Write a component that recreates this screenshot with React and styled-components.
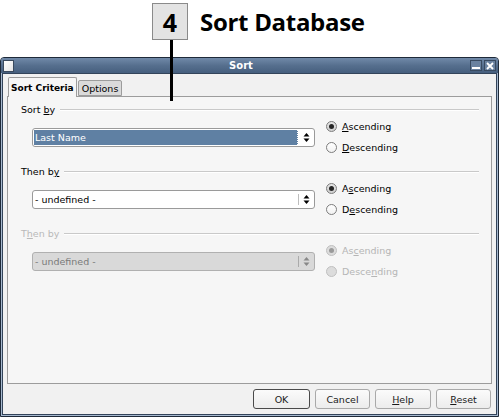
import React from 'react';
import styled, { createGlobalStyle, css } from 'styled-components';

const Global = createGlobalStyle`
  html, body { margin: 0; padding: 0; background: #fff; }
  body { width: 500px; height: 417px; overflow: hidden; font-family: "DejaVu Sans", "Liberation Sans", sans-serif; }
`;

const Page = styled.div`
  position: relative;
  width: 500px;
  height: 417px;
  display: flex;
  flex-direction: column;
`;

const Header = styled.div`
  height: 57px;
  box-sizing: border-box;
  padding: 3px 0 0 152px;
  display: flex;
  align-items: flex-start;
  gap: 12px;
`;

const StepBox = styled.div`
  width: 36px;
  height: 37px;
  box-sizing: border-box;
  border: 1px solid #8a8a8a;
  background: #e3e3e3;
  display: flex;
  align-items: center;
  justify-content: center;
  font: 700 25px "Open Sans", sans-serif;
  color: #000;
`;

const Heading = styled.h1`
  margin: 0;
  font: 700 24px/37px "Open Sans", sans-serif;
  letter-spacing: -0.3px;
  color: #000;
`;

const Leader = styled.div`
  position: absolute;
  left: 170px;
  top: 40px;
  width: 3px;
  height: 61px;
  background: #000;
  z-index: 5;
`;

const Win = styled.div`
  flex: 1;
  display: flex;
  flex-direction: column;
  border: 1px solid #1e2a39;
  border-radius: 4px 4px 0 0;
  background: #a7b9cf;
  margin-right: 1px;
`;

const TitleBar = styled.div`
  height: 15px;
  display: flex;
  align-items: center;
  padding: 0 2px;
  background: linear-gradient(#7089a8, #566f8e 50%, #465f7e);
  border-radius: 3px 3px 0 0;
  position: relative;
`;

const DocIcon = styled.div`
  width: 11px;
  height: 12px;
  background: linear-gradient(135deg, #ffffff, #e4e4e4);
  border: 1px solid #3a4a5e;
  box-sizing: border-box;
`;

const TitleText = styled.div`
  flex: 1;
  text-align: center;
  color: #fff;
  font-weight: 700;
  font-size: 10px;
`;

const WinBtn = styled.div`
  width: 12px;
  height: 11px;
  box-sizing: border-box;
  border: 1px solid #384a60;
  background: #6a82a0;
  margin-left: 2px;
  display: flex;
  align-items: center;
  justify-content: center;
`;

const Body = styled.div`
  flex: 1;
  margin: 0 1px 1px;
  border: 1px solid #33445a;
  background: #f1f1f1;
  display: flex;
  flex-direction: column;
  padding: 3px 4px 5px 4px;
`;

const Tabs = styled.div`
  display: flex;
  align-items: flex-end;
  padding-left: 1px;
  position: relative;
  z-index: 2;
  margin-bottom: -1px;
`;

const Tab = styled.div`
  box-sizing: border-box;
  border: 1px solid #9c9c9c;
  border-bottom: none;
  border-radius: 2px 2px 0 0;
  font-size: 9.5px;
  color: #000;
  display: flex;
  align-items: center;
  padding: 0 2px;
  ${(p) =>
    p.$active
      ? css`
          height: 20px;
          background: #f6f6f6;
          font-weight: 700;
          font-size: 9px;
        `
      : css`
          height: 16px;
          background: #dadada;
          margin-bottom: 1px;
          margin-left: 1px;
          border-bottom: 1px solid #9c9c9c;
          padding: 0 3px;
        `}
`;

const Panel = styled.div`
  flex: 1;
  border: 1px solid #9c9c9c;
  background: #f6f6f6;
  padding: 6px 12px 0 13px;
  display: flex;
  flex-direction: column;
  gap: 7px;
`;

const Section = styled.div`
  display: flex;
  flex-direction: column;
`;

const LabelRow = styled.div`
  height: 13px;
  display: flex;
  align-items: center;
  gap: 5px;
  font-size: 9.5px;
  color: ${(p) => (p.$disabled ? '#b9b9b9' : '#000')};
`;

const Rule = styled.div`
  flex: 1;
  border-top: 1px solid #c9c9c9;
  border-bottom: 1px solid #ffffff;
`;

const ContentRow = styled.div`
  display: flex;
  align-items: center;
  gap: 11px;
  padding-left: 11px;
`;

const Select = styled.div`
  width: 283px;
  height: 19px;
  box-sizing: border-box;
  border: 1px solid ${(p) => (p.$disabled ? '#b0b0b0' : '#9a9a9a')};
  border-radius: 3px;
  background: ${(p) => (p.$disabled ? '#d9d9d9' : '#fff')};
  display: flex;
  align-items: stretch;
  font-size: 9.5px;
`;

const SelectValue = styled.div`
  flex: 1;
  margin: 1px 0 1px 1px;
  padding-left: 1px;
  display: flex;
  align-items: center;
  color: ${(p) => (p.$disabled ? '#7a7a7a' : p.$focused ? '#fff' : '#000')};
  background: ${(p) => (p.$focused ? '#5f80a3' : 'transparent')};
  ${(p) => p.$focused && css`border-right: 1px dotted #ffffff;`}
`;

const Arrows = styled.div`
  width: 16px;
  display: flex;
  align-items: center;
  justify-content: center;
  position: relative;
  ${(p) =>
    p.$sep &&
    css`
      &::before {
        content: '';
        position: absolute;
        left: 0;
        top: 3px;
        bottom: 3px;
        width: 1px;
        background: ${p.$disabled ? '#aaa' : '#bdbdbd'};
      }
    `}
`;

const Radios = styled.div`
  display: flex;
  flex-direction: column;
`;

const RadioRow = styled.div`
  height: 21px;
  display: flex;
  align-items: center;
  gap: 5px;
  font-size: 9.5px;
  color: ${(p) => (p.$disabled ? '#b5b5b5' : '#000')};
`;

const Circle = styled.div`
  width: 11px;
  height: 11px;
  box-sizing: border-box;
  border-radius: 50%;
  border: 1px solid ${(p) => (p.$disabled ? '#c0c0c0' : '#7d7d7d')};
  background: ${(p) =>
    p.$disabled ? '#dcdcdc' : p.$checked ? 'linear-gradient(#e6e6e6, #cfcfcf)' : 'linear-gradient(#ffffff, #f1f1f1)'};
  display: flex;
  align-items: center;
  justify-content: center;
  &::after {
    content: '';
    display: ${(p) => (p.$checked ? 'block' : 'none')};
    width: 5px;
    height: 5px;
    border-radius: 50%;
    background: ${(p) => (p.$disabled ? '#9a9a9a' : '#262626')};
  }
`;

const ButtonRow = styled.div`
  display: flex;
  justify-content: flex-end;
  gap: 5px;
  padding: 5px 1px 0 0;
`;

const Button = styled.div`
  width: ${(p) => p.$w}px;
  height: 20px;
  box-sizing: border-box;
  border: 1px solid ${(p) => (p.$default ? '#4a4a4a' : '#a9a9a9')};
  border-radius: 3px;
  background: linear-gradient(#fbfbfb, #ececec);
  display: flex;
  align-items: center;
  justify-content: center;
  font-size: 9.5px;
  color: #1a1a1a;
`;

const U = styled.span`
  text-decoration: underline;
  text-underline-offset: 1px;
`;

function ArrowIcon({ color = '#000' }) {
  return (
    <svg width="7" height="11" viewBox="0 0 7 11">
      <path d="M3.5 1 L6.5 4.5 L0.5 4.5 Z" fill={color} />
      <path d="M0.5 6.5 L6.5 6.5 L3.5 10 Z" fill={color} />
    </svg>
  );
}

function Radio({ checked, disabled, children }) {
  return (
    <RadioRow $disabled={disabled}>
      <Circle $checked={checked} $disabled={disabled} />
      <span>{children}</span>
    </RadioRow>
  );
}

function SortSection({ label, value, focused, disabled, asc, desc }) {
  return (
    <Section>
      <LabelRow $disabled={disabled}>
        <span>{label}</span>
        <Rule />
      </LabelRow>
      <ContentRow>
        <Select $disabled={disabled}>
          <SelectValue $focused={focused} $disabled={disabled}>{value}</SelectValue>
          <Arrows $sep={!focused} $disabled={disabled}>
            <ArrowIcon color={disabled ? '#888' : '#000'} />
          </Arrows>
        </Select>
        <Radios>
          <Radio checked disabled={disabled}>{asc}</Radio>
          <Radio disabled={disabled}>{desc}</Radio>
        </Radios>
      </ContentRow>
    </Section>
  );
}

export default function App() {
  return (
    <Page>
      <Global />
      <Header>
        <StepBox>4</StepBox>
        <Heading>Sort Database</Heading>
      </Header>
      <Leader />
      <Win>
        <TitleBar>
          <DocIcon />
          <TitleText>Sort</TitleText>
          <WinBtn>
            <svg width="8" height="7" viewBox="0 0 8 7"><rect x="0" y="5" width="8" height="2" fill="#fff" /></svg>
          </WinBtn>
          <WinBtn>
            <svg width="8" height="8" viewBox="0 0 8 8"><path d="M1 1 L7 7 M7 1 L1 7" stroke="#fff" strokeWidth="1.8" /></svg>
          </WinBtn>
        </TitleBar>
        <Body>
          <Tabs>
            <Tab $active>Sort Criteria</Tab>
            <Tab>Options</Tab>
          </Tabs>
          <Panel>
            <SortSection
              label={<>Sort <U>b</U>y</>}
              value="Last Name"
              focused
              asc={<><U>A</U>scending</>}
              desc={<><U>D</U>escending</>}
            />
            <SortSection
              label={<>Then b<U>y</U></>}
              value="- undefined -"
              asc={<>A<U>s</U>cending</>}
              desc={<>D<U>e</U>scending</>}
            />
            <SortSection
              label={<>T<U>h</U>en by</>}
              value="- undefined -"
              disabled
              asc={<>As<U>c</U>ending</>}
              desc={<>Desce<U>n</U>ding</>}
            />
          </Panel>
          <ButtonRow>
            <Button $w={57} $default>OK</Button>
            <Button $w={55}>Cancel</Button>
            <Button $w={56}><span><U>H</U>elp</span></Button>
            <Button $w={55}><span><U>R</U>eset</span></Button>
          </ButtonRow>
        </Body>
      </Win>
    </Page>
  );
}
